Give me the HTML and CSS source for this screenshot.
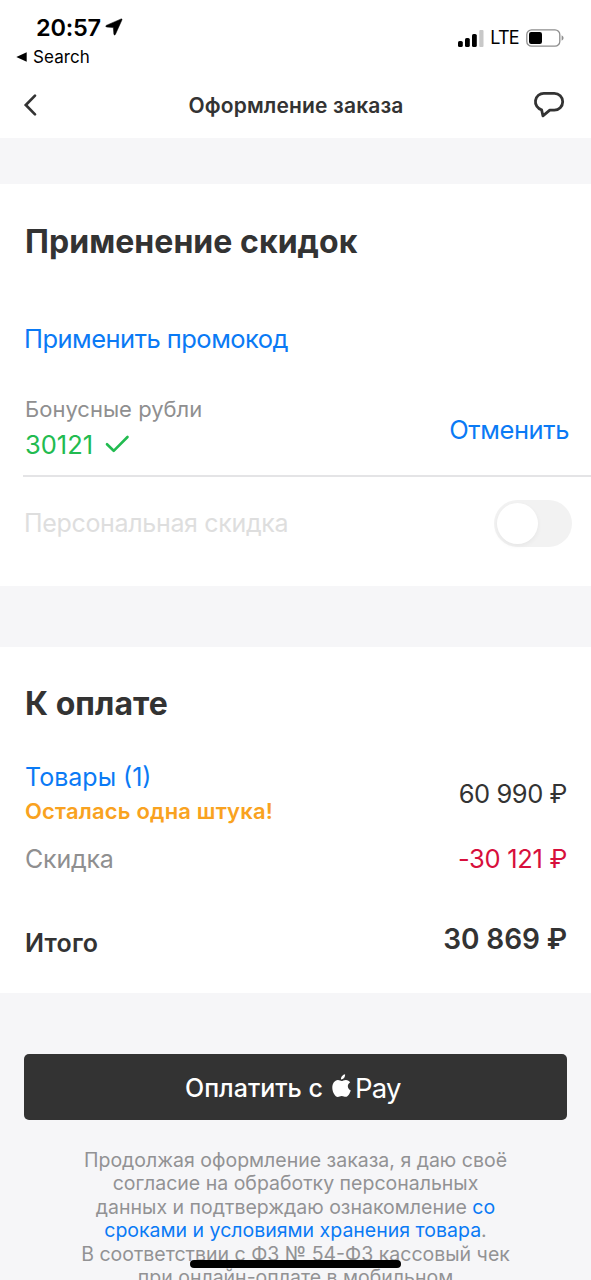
FILE: index.html
```html
<!DOCTYPE html>
<html lang="ru">
<head>
<meta charset="utf-8">
<meta name="viewport" content="width=device-width">
<title>Оформление заказа</title>
<link rel="stylesheet" href="styles.css">
</head>
<body>
<div class="screen">
  <header class="status">
    <div class="status-left">
      <div class="clock"><span class="time">20:57</span>
        <svg class="location" width="18" height="18" viewBox="0 0 18 18"><path d="M16.2 .9 L1.2 7.4 Q.2 8.3 1.4 9 L8.3 9.6 L8.9 16.4 Q9.6 17.6 10.4 16.4 L17 1.8 Q17.1 .7 16.2 .9Z" stroke="#000" stroke-width=".5"/></svg>
      </div>
      <div class="back-app">
        <svg width="11" height="10" viewBox="0 0 11 10"><path d="M.3 5 L10.7 .2 V9.8Z"/></svg>
        <span class="back-label">Search</span>
      </div>
    </div>
    <div class="status-right">
      <svg class="signal" width="27" height="18" viewBox="0 0 27 18"><rect x="1" y="12" width="4.8" height="6" rx="1.6"/><rect x="8" y="9" width="4.8" height="9" rx="1.6"/><rect x="15" y="5" width="4.8" height="13" rx="1.6"/><rect x="22.3" y="1" width="4.2" height="17" rx="1" fill="#c8c8c8"/></svg>
      <span class="lte">LTE</span>
      <svg class="battery" width="38" height="18" viewBox="0 0 38 18"><rect x=".8" y=".8" width="33" height="16.4" rx="4.8" fill="none" stroke="#8e8e8e" stroke-width="1.3"/><rect x="3" y="3" width="13" height="12" rx="2.2"/><path d="M35.6 6.3 Q37.6 7.2 37.6 9 Q37.6 10.8 35.6 11.7Z" fill="#8e8e8e"/></svg>
    </div>
  </header>
  <nav class="navbar">
    <svg class="chevron" width="14" height="24" viewBox="0 0 14 24"><path d="M12 2.6 L2.8 12 L12 21.4" fill="none" stroke="#333" stroke-width="2.7" stroke-linecap="round"/></svg>
    <h1 class="nav-title">Оформление заказа</h1>
    <svg class="chat" width="32" height="28" viewBox="0 0 32 28"><path d="M11 2.3 H21.3 A8.4 8.4 0 0 1 21.3 19.1 H16.8 L9.9 24.8 L8.6 18.8 A8.4 8.4 0 0 1 11 2.3Z" fill="none" stroke="#333" stroke-width="2.8" stroke-linejoin="round"/></svg>
  </nav>
  <section class="card discounts">
    <h2 class="heading discounts-title">Применение скидок</h2>
    <a class="link promo">Применить промокод</a>
    <div class="bonus">
      <div class="bonus-info">
        <span class="bonus-label">Бонусные рубли</span>
        <div class="bonus-amount"><span class="bonus-value">30121</span>
          <svg width="25" height="18" viewBox="0 0 25 18"><path d="M2 9.2 L8.7 15.8 L22.5 2" fill="none" stroke="#22bb50" stroke-width="2.6" stroke-linecap="round" stroke-linejoin="round"/></svg>
        </div>
      </div>
      <a class="link cancel">Отменить</a>
    </div>
    <div class="personal">
      <span class="personal-label">Персональная скидка</span>
      <span class="toggle"><span class="knob"></span></span>
    </div>
  </section>
  <section class="card payment">
    <h2 class="heading payment-title">К оплате</h2>
    <div class="row goods">
      <div class="goods-info">
        <a class="link goods-link">Товары (1)</a>
        <span class="warning">Осталась одна штука!</span>
      </div>
      <span class="price goods-price">60 990 ₽</span>
    </div>
    <div class="row discount">
      <span class="discount-label">Скидка</span>
      <span class="price discount-price">-30 121 ₽</span>
    </div>
    <div class="row total">
      <span class="total-label">Итого</span>
      <span class="total-price">30 869 ₽</span>
    </div>
  </section>
  <footer class="footer">
    <button class="pay"><span class="pay-label">Оплатить с</span>
      <svg class="apple" width="19" height="24" viewBox="0 0 19 24"><path d="M13.1.3 C13.3 3.2 11.5 5.4 9 5.5 C8.8 2.9 10.8.7 13.1.3Z M9.6 7.1 C10.5 7.1 11.7 5.9 13.9 5.9 C15.8 5.9 17.3 7 18.2 8.2 C14.7 10.3 15.3 14.9 18.8 16.4 C17.9 19 16 22.7 13.8 22.8 C12.2 22.8 11.7 21.9 9.8 21.9 C7.9 21.9 7.2 22.8 5.7 22.9 C3.3 22.9.4 18.2.3 13.9 C.2 9.4 2.8 6.4 5.8 6.1 C7.3 6 8.7 7.1 9.6 7.1Z" fill="#fff"/></svg>
      <span class="pay-brand">Pay</span>
    </button>
    <p class="legal">
      <span class="line">Продолжая оформление заказа, я даю своё</span>
      <span class="line">согласие на обработку персональных</span>
      <span class="line">данных и подтверждаю ознакомление <a class="link">со</a></span>
      <span class="line"><a class="link">сроками и условиями хранения товара</a>.</span>
      <span class="line">В соответствии с ФЗ № 54-ФЗ кассовый чек</span>
      <span class="line">при онлайн-оплате в мобильном</span>
    </p>
  </footer>
  <div class="home-indicator"></div>
</div>
</body>
</html>
```
FILE: styles.css
```css
* { box-sizing: border-box; }
body { margin: 0; background: #f6f6f8; font-family: Inter, "Liberation Sans", sans-serif; color: #333; }
h1, h2, p { margin: 0; }
svg { display: block; flex: none; }
span, a { white-space: nowrap; }
.screen { position: relative; width: 591px; height: 1280px; overflow: hidden; }
.link { color: #0a7af5; text-decoration: none; }

.status { height: 72px; background: #fff; color: #000; display: flex; justify-content: space-between; padding: 12px 27px 0 16px; }
.clock { display: flex; align-items: center; height: 30px; padding-left: 20px; gap: 4px; }
.time { font-size: 23.5px; font-weight: 600; letter-spacing: -.2px; }
.back-app { display: flex; align-items: center; height: 29px; gap: 6px; }
.back-label { font-size: 17px; letter-spacing: .1px; }
.status-right { display: flex; align-items: center; height: 51px; }
.lte { font-size: 18px; letter-spacing: -.7px; margin: 0 7px 0 6px; }

.navbar { height: 66px; background: #fff; display: flex; align-items: center; justify-content: space-between; padding: 0 26px 0 23px; }
.nav-title { font-size: 21px; font-weight: 600; letter-spacing: .15px; line-height: 30px; margin: 1px 0 0 22px; }

.card { background: #fff; }
.heading { font-size: 32px; font-weight: 700; line-height: 40px; letter-spacing: .05px; }
.discounts { height: 402px; margin-top: 46px; padding: 38px 0 0 23px; display: flex; flex-direction: column; }
.discounts-title { padding-left: 2px; }
.promo { font-size: 25.5px; line-height: 36px; margin-top: 59px; padding-left: 1px; letter-spacing: -.52px; }
.bonus { display: flex; justify-content: space-between; height: 120px; padding: 35px 22px 0 2px; border-bottom: 2px solid #e4e4e6; }
.bonus-info { display: flex; flex-direction: column; }
.bonus-label { font-size: 22px; line-height: 34px; color: #8f8f90; }
.bonus-amount { display: flex; align-items: center; gap: 12px; height: 36px; }
.bonus-value { font-size: 25.5px; color: #22bb50; }
.cancel { font-size: 25.5px; line-height: 36px; letter-spacing: -.4px; padding-top: 20px; }
.personal { display: flex; align-items: center; justify-content: space-between; height: 92px; padding: 0 19px 0 1px; }
.personal-label { font-size: 25px; letter-spacing: -.33px; color: #dedede; }
.toggle { width: 78px; height: 47px; border-radius: 24px; background: #f2f2f2; padding: 3px; }
.knob { display: block; width: 41px; height: 41px; border-radius: 50%; background: #fff; box-shadow: 0 2px 5px rgba(0,0,0,.05); }

.payment { height: 346px; margin-top: 61px; padding: 37px 24px 0 25px; }
.row { display: flex; align-items: center; justify-content: space-between; }
.goods { height: 70px; margin-top: 35px; }
.goods-info { display: flex; flex-direction: column; }
.goods-link { font-size: 25px; line-height: 34px; }
.warning { font-size: 22px; line-height: 34px; font-weight: 600; letter-spacing: .18px; color: #f9a220; }
.price { font-size: 25.5px; letter-spacing: -.45px; padding-bottom: 2px; }
.discount { height: 60px; }
.discount-label { font-size: 25px; letter-spacing: -.2px; color: #8f8f90; }
.discount-price { color: #d70f3c; letter-spacing: -.3px; }
.total { height: 104px; }
.total-label { font-size: 25px; font-weight: 600; padding-top: 4px; letter-spacing: .2px; }
.total-price { font-size: 28px; font-weight: 600; padding-bottom: 4px; letter-spacing: -.1px; }

.footer { padding: 61px 24px 0; }
.pay { width: 543px; height: 66px; border: 0; border-radius: 5px; background: #333; color: #fff; font-family: inherit; padding: 2px 0 0 161px; display: flex; align-items: center; }
.pay-label { font-size: 25px; font-weight: 500; }
.apple { margin: 0 4px 4px 9px; }
.pay-brand { font-size: 27.5px; letter-spacing: -.7px; }
.legal { margin-top: 28.5px; font-size: 19.5px; line-height: 23.5px; color: #929294; text-align: center; }
.line { display: block; }
.home-indicator { position: absolute; left: 190px; top: 1260px; width: 211px; height: 8px; border-radius: 4px; background: #000; }
```
